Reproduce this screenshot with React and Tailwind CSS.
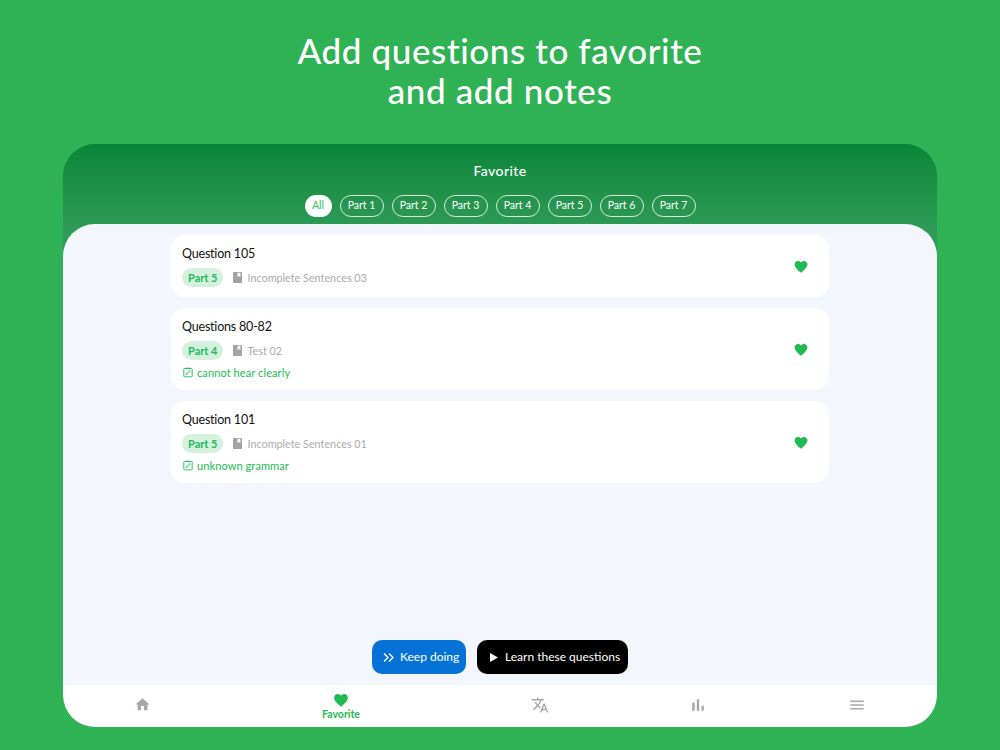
import React from 'react';

const font = { fontFamily: 'Lato, "Noto Sans", sans-serif' };

const parts = ['Part 1', 'Part 2', 'Part 3', 'Part 4', 'Part 5', 'Part 6', 'Part 7'];

const questions = [
  { title: 'Question 105', part: 'Part 5', source: 'Incomplete Sentences 03' },
  { title: 'Questions 80-82', part: 'Part 4', source: 'Test 02', note: 'cannot hear clearly' },
  { title: 'Question 101', part: 'Part 5', source: 'Incomplete Sentences 01', note: 'unknown grammar' },
];

const Heart = ({ className }) => (
  <svg viewBox="0 0 24 24" className={className} fill="currentColor">
    <path d="M12 22 C10 20 1 13.5 1 7.6 C1 4 3.8 1.5 7 1.5 C9 1.5 11 2.6 12 4.4 C13 2.6 15 1.5 17 1.5 C20.2 1.5 23 4 23 7.6 C23 13.5 14 20 12 22 Z" />
  </svg>
);

const MaterialIcon = ({ d, size }) => (
  <svg viewBox="0 0 24 24" width={size} height={size} fill="#a8a8a8">
    <path d={d} />
  </svg>
);

const BookIcon = () => (
  <svg viewBox="0 0 10 12" className="h-[11px] w-[9px] shrink-0" fill="#a3a3a3">
    <path d="M1 0 H9 A1 1 0 0 1 10 1 V11 A1 1 0 0 1 9 12 H1 A1 1 0 0 1 0 11 V1 A1 1 0 0 1 1 0 Z M5 0.8 V5.5 L6.6 4.4 L8.2 5.5 V0.8 Z" fillRule="evenodd" />
  </svg>
);

const NoteIcon = () => (
  <svg viewBox="0 0 12 12" className="ml-[1px] h-[11px] w-[10px] shrink-0" fill="none" stroke="#22bb55" strokeWidth="1.1">
    <rect x="1" y="1.2" width="10" height="10" rx="0.8" />
    <path d="M4 2 V0.6 H8 V2" strokeWidth="0.8" />
    <path d="M3.6 8.6 L3.8 7.2 L7.8 3.4 L8.9 4.5 L5 8.4 Z" strokeWidth="0.9" />
  </svg>
);

const QuestionCard = ({ item }) => (
  <article className="flex items-center justify-between rounded-[14px] bg-white pl-[11px] pr-[21px] pt-[10px] pb-[8px]">
    <div>
      <h3 className="text-[12.5px] leading-[18px] tracking-[-0.2px] text-[#111]">{item.title}</h3>
      <div className="mb-[2px] mt-[5px] flex items-center gap-[10px]">
        <span className="rounded-full bg-[#d3f1dd] px-[6px] text-[11px] font-bold leading-[19px] text-[#22bb55]">
          {item.part}
        </span>
        <span className="flex items-center gap-[5px] text-[10.8px] leading-[19px] text-[#aaa]">
          <BookIcon />
          {item.source}
        </span>
      </div>
      {item.note ? (
        <div className="mb-[1px] mt-[4px] flex items-center gap-[4px] text-[11px] leading-[17px] tracking-[0.1px] text-[#22bb55]">
          <NoteIcon />
          {item.note}
        </div>
      ) : null}
    </div>
    <Heart className="h-[14px] w-[14px] text-[#1fba52]" />
  </article>
);

export default function App() {
  return (
    <div className="flex h-[750px] flex-col items-center bg-[#2fb254] text-white" style={font}>
      <h1 className="mt-[30px] h-[114px] text-center text-[35px] font-medium leading-[40px] tracking-[0.6px]">
        Add questions to favorite
        <br />
        and add notes
      </h1>

      <main className="flex h-[583px] w-[874px] flex-col overflow-hidden rounded-[32px] bg-gradient-to-b from-[#068638] to-[#2f9b58] to-[15%]">
        <header className="h-[80px] shrink-0 text-center">
          <h2 className="pt-[17px] text-[14px] font-medium leading-[20px] tracking-[0.4px]">Favorite</h2>
          <div className="mt-[14px] flex justify-center gap-[8px] text-[10.5px]">
            <span className="flex h-[22px] w-[27px] items-center justify-center rounded-full bg-white text-[#35c265]">All</span>
            {parts.map((part) => (
              <span key={part} className="flex h-[22px] w-[44px] items-center justify-center rounded-full border border-white/80">
                {part}
              </span>
            ))}
          </div>
        </header>

        <section className="flex min-h-0 flex-1 flex-col rounded-t-[32px] bg-[#f3f6fc]">
          <div className="mx-auto flex w-[658px] flex-1 flex-col gap-[11px] pt-[11px]">
            {questions.map((item) => (
              <QuestionCard key={item.title} item={item} />
            ))}
          </div>
          <div className="flex justify-center gap-[11px] pb-[11px] text-[12px]">
            <button className="flex h-[34px] w-[94px] items-center gap-[6px] rounded-[10px] bg-[#0672d8] pl-[11px] text-white">
              <svg viewBox="0 0 11 9" className="h-[9px] w-[11px]" fill="none" stroke="white" strokeWidth="1.3">
                <path d="M1 0.5 L5 4.5 L1 8.5 M6 0.5 L10 4.5 L6 8.5" />
              </svg>
              Keep doing
            </button>
            <button className="flex h-[34px] w-[151px] items-center gap-[7px] rounded-[10px] bg-black pl-[13px] text-white">
              <svg viewBox="0 0 8 9" className="h-[9px] w-[8px]" fill="white">
                <path d="M0 0 L8 4.5 L0 9 Z" />
              </svg>
              Learn these questions
            </button>
          </div>
        </section>

        <nav className="flex h-[42px] shrink-0 items-center bg-white">
          <div className="mb-[3px] flex w-[158px] justify-center">
            <MaterialIcon size={17} d="M10 20v-6h4v6h5v-8h3L12 3 2 12h3v8z" />
          </div>
          <div className="flex w-[240px] flex-col items-center pt-[2px] text-[#1fba52]">
            <Heart className="h-[15px] w-[16px]" />
            <span className="text-[10.5px] font-bold leading-[13px]">Favorite</span>
          </div>
          <div className="mb-[3px] flex w-[158px] justify-center">
            <MaterialIcon size={18} d="M12.87 15.07l-2.54-2.51.03-.03c1.74-1.94 2.98-4.17 3.71-6.53H17V4h-7V2H8v2H1v1.99h11.17C11.5 7.92 10.44 9.75 9 11.35 8.07 10.32 7.3 9.19 6.69 8h-2c.73 1.63 1.73 3.17 2.98 4.56l-5.09 5.02L4 19l5-5 3.11 3.11.76-2.04zM18.5 10h-2L12 22h2l1.12-3h4.75L21 22h2l-4.5-12zm-2.62 7l1.62-4.33L19.12 17h-3.24z" />
          </div>
          <div className="mb-[3px] flex w-[158px] justify-center">
            <MaterialIcon size={20} d="M5 9.2h3V19H5zM10.6 5h2.8v14h-2.8zm5.6 8H19v6h-2.8z" />
          </div>
          <div className="mb-[3px] flex w-[160px] justify-center">
            <MaterialIcon size={18} d="M3 18h18v-2H3zm0-5h18v-2H3zm0-7v2h18V6z" />
          </div>
        </nav>
      </main>
    </div>
  );
}
